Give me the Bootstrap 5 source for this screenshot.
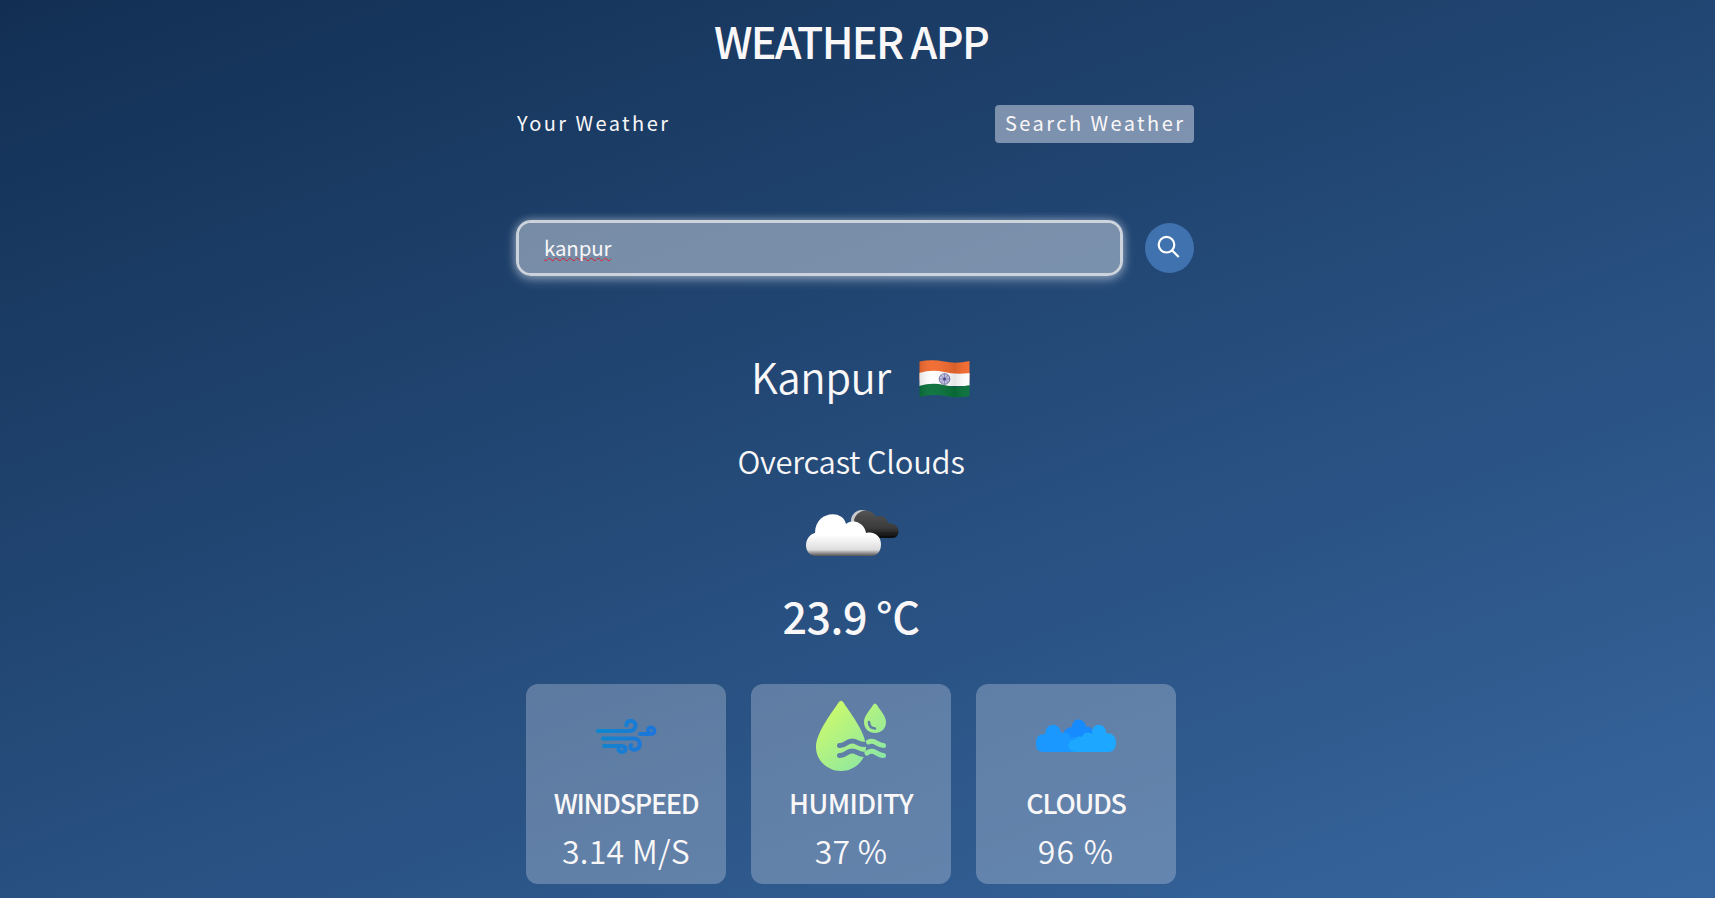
<!DOCTYPE html>
<html lang="en">
<head>
<meta charset="utf-8">
<meta name="viewport" content="width=device-width, initial-scale=1">
<title>Weather App</title>
<link href="https://cdn.jsdelivr.net/npm/bootstrap@5.3.0/dist/css/bootstrap.min.css" rel="stylesheet">
<style>
html,body{height:898px;overflow:hidden}
body{background:linear-gradient(160deg,#122f53 0%,#3f72af 121%);color:#f9f7f7;font-family:"Noto Sans CJK SC","Noto Sans",sans-serif;white-space:nowrap}
.page{width:1702px}
h1{font-size:43px;line-height:60px;font-weight:500;letter-spacing:-1.65px;padding-top:10px}
.tabs{width:677px;margin:35px 0 0 517px}
.tab{font-size:20px;line-height:36px;letter-spacing:2.45px;font-weight:400;height:38px}
.tab.on{background:rgba(219,226,239,.5);border-radius:4px;width:199px;height:38px;padding-left:10px}
.search{width:678px;margin:77px 0 0 516px}
.field{width:607px;height:56px;border:3px solid rgba(249,247,247,.8);border-radius:15px;background:rgba(219,226,235,.48);background-clip:padding-box;box-shadow:0 3px 12px rgba(219,226,239,.45),0 0 8px rgba(219,226,239,.4);padding-left:25px;font-size:20.5px;letter-spacing:-.15px;line-height:49px}
.typo{text-decoration:underline wavy #d5232f 1.2px;text-underline-offset:1px;text-decoration-skip-ink:none}
.go{width:49px;height:50px;background:#3f72af;border-radius:50%}
.city{font-size:42px;line-height:60px;font-weight:350;margin:72px 0 0 751px;height:60px}
.city span{width:138px;letter-spacing:-.5px;margin-top:-5px}
.city svg{margin:2px 0 0 30px}
.desc{font-size:31px;line-height:46px;font-weight:350;margin-top:30px;letter-spacing:-.25px}
.sky{width:100px;height:60px;margin:18px 0 0 801px}
.temp{font-size:43px;line-height:60px;font-weight:500;margin-top:23px;letter-spacing:-.5px}
.stats{gap:25px;margin:39px 0 0 526px}
.stat{width:200px;height:200px;border-radius:12px;background:rgba(219,226,239,.3)}
.pic{height:101px}
.name{font-size:27px;line-height:36px;font-weight:500;letter-spacing:-1.3px}
.name.wide{letter-spacing:-.6px}
.val{font-size:32px;line-height:46px;font-weight:350;margin-top:6px;letter-spacing:.3px}
.val.wide{letter-spacing:1.3px}
</style>
</head>
<body>
<main class="page">
<h1 class="text-center m-0"><span>WEATHER APP</span></h1>
<nav class="tabs d-flex justify-content-between"><span class="tab">Your Weather</span><span class="tab on">Search Weather</span></nav>
<form class="search d-flex justify-content-between align-items-center">
<div class="field"><span class="typo">kanpur</span></div>
<div class="go"><svg class="d-block" width="49" height="50" fill="none" stroke="#fff" stroke-width="2.2"><circle cx="21.5" cy="21.7" r="7.8"/><path d="M27 27.3 33.7 34"/></svg></div>
</form>
<div class="city d-flex align-items-center"><span>Kanpur</span>
<svg width="51" height="38" viewBox="0 0 51 38"><defs><clipPath id="f"><path d="M.5 1.5Q13-1 25 1.5T50.500 1V36Q38 38.500 26 36T.5 37Z"/></clipPath><linearGradient id="fs"><stop offset="0" stop-color="#000" stop-opacity=".12"/><stop offset=".25" stop-color="#fff" stop-opacity=".04"/><stop offset=".7" stop-color="#000" stop-opacity=".1"/><stop offset="1" stop-color="#fff" stop-opacity=".03"/></linearGradient></defs><g clip-path="url(#f)"><path fill="#f26a2e" d="M0 0H51V20H0Z"/><path fill="#fff" d="M0 13Q13 9 25 12T51 13V26H0Z"/><path fill="#08713a" d="M0 26Q13 22 25 25T51 25V38H0Z"/><circle cx="25.500" cy="19" r="5.300" fill="#c9c9e4" stroke="#7777b5"/><path stroke="#6868aa" stroke-width=".6" d="M20 19h11M25.500 13.500v11M21.600 15l7.800 8M29.400 15l-7.800 8"/><circle cx="25.500" cy="19" r="1.500" fill="#444493"/><path fill="url(#fs)" d="M0 0H51V38H0Z"/></g></svg></div>
<div class="desc text-center"><span>Overcast Clouds</span></div>
<svg class="sky d-block" viewBox="0 0 100 60"><defs><linearGradient id="w" x2="0" y2="1"><stop offset=".5" stop-color="#fff"/><stop offset=".85" stop-color="#ddd"/><stop offset=".94" stop-color="#888"/><stop offset="1" stop-color="#555"/></linearGradient><linearGradient id="b" x2="0" y2="1"><stop stop-color="#555"/><stop offset=".65" stop-color="#393939"/><stop offset="1" stop-color="#080808"/></linearGradient><filter id="soft" x="-5%" y="-5%" width="110%" height="110%"><feGaussianBlur stdDeviation=".6"/></filter></defs>
<g filter="url(#soft)"><path fill="#c9cbcc" d="M50 21A11 11 0 0 1 70 13L60 29Z"/><path fill="url(#b)" d="M53 18C56 7 70 5 75 15C81 12 86 16 87 21C95 21 99 27 97 32Q96 36 91 36H60Z"/><path fill="url(#w)" d="M14 54C2 53 2 34 14 31C14 9 42 7 45 22C53 16 64 22 65 31C74 29 80 35 80 42C80 50 76 54 70 54Z"/></g></svg>
<div class="temp text-center"><span>23.9 °C</span></div>
<section class="stats d-flex">
<div class="stat text-center"><div class="pic"><svg width="200" height="101" fill="none" stroke-width="4" stroke-linecap="round"><defs><linearGradient id="wi" gradientUnits="userSpaceOnUse" x1="70" x2="130" y1="40" y2="60"><stop stop-color="#0789cf"/><stop offset=".35" stop-color="#1581d0"/><stop offset="1" stop-color="#1e73dd"/></linearGradient></defs><g stroke="url(#wi)"><path d="M72 47H103C109 47 111 42 108.500 38.500C105.500 35 100 37 100.500 41.500M77 54.500H108C117 55 115 67 107 65.500Q103 64 105 61M78 62H95C101 62 101 68 96 68Q92 67.500 92.500 65M114 50H125C130 50 129 43.500 125 43.500Q121 43.500 122.500 48"/></g></svg></div><div class="name"><span>WINDSPEED</span></div><div class="val"><span>3.14 M/S</span></div></div>
<div class="stat text-center"><div class="pic"><svg width="200" height="101"><defs><linearGradient id="h" gradientUnits="userSpaceOnUse" x1="72" y1="20" x2="128" y2="82"><stop stop-color="#d0fb68"/><stop offset="1" stop-color="#88e6a7"/></linearGradient><mask id="m"><path fill="#fff" d="M87.500 18.500Q90 15 92.500 18.500C97 26 115 48 115 63C115 77 103 87 90 87S65 77 65 63C65 48 83 26 87.500 18.500Z"/><path fill="none" stroke="#000" stroke-width="5" stroke-linecap="round" d="M88.500 61.500C95 62 95 57 101 57S108 62 116 60M88.500 71.500C95 72 95 67 101 67S108 72 116 70"/></mask><mask id="d"><path fill="#fff" d="M122 21Q124 18 126 21C129 26 135 32 135 38C135 45 130 49 124 49S113 45 113 38C113 32 119 26 122 21Z"/><path fill="none" stroke="#000" stroke-width="2.600" stroke-linecap="round" d="M118 38Q118 44 124 44.500"/></mask></defs><path fill="url(#h)" mask="url(#m)" d="M60 10h60v80H60z"/><path fill="url(#h)" mask="url(#d)" d="M110 15h30v40h-30z"/><path fill="none" stroke="url(#h)" stroke-width="5" stroke-linecap="round" d="M117.500 58C124 55 126 61.500 132.500 61.500M116 69C123 64 126 71.500 132.500 71.500"/></svg></div><div class="name wide"><span>HUMIDITY</span></div><div class="val"><span>37 %</span></div></div>
<div class="stat text-center"><div class="pic"><svg width="200" height="101"><path fill="#168bff" d="M86 56C86 46 92 43 96 43C96 33 109 33 110 43Q116 42 117 48V60H86Z"/><path fill="#1a98ff" d="M67 68Q60 68 60 60V57Q61 50 69 50C70 38 84 38 85 49Q93 47 95 54Q101 51 105 56V68Z"/><path fill="#1ea7ff" d="M100 68C90 67 90 56 99 56C101 51 105 53 106 53C108 47 113 48 116 50C115 38 130 38 130 49C137 49 140 53 140 58C140 65 137 68 132 68Z"/></svg></div><div class="name"><span>CLOUDS</span></div><div class="val wide"><span>96 %</span></div></div>
</section>
</main>
<script src="https://cdn.jsdelivr.net/npm/bootstrap@5.3.0/dist/js/bootstrap.bundle.min.js"></script>
</body>
</html>
